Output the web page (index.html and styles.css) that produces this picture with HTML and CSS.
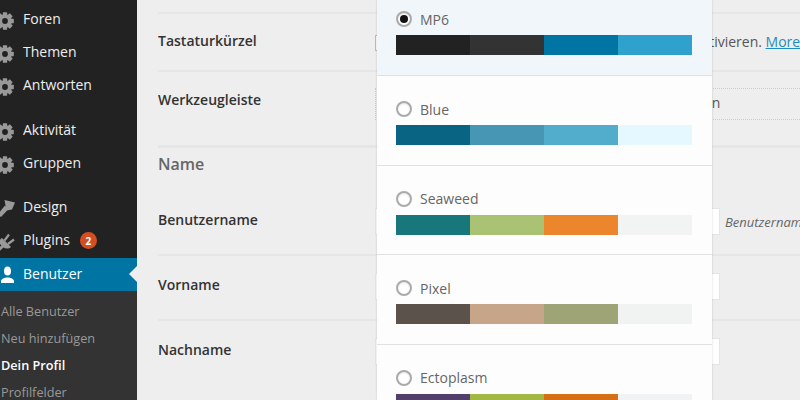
FILE: index.html
```html
<!DOCTYPE html>
<html lang="de">
<head>
<meta charset="utf-8">
<title>Profil</title>
<link rel="stylesheet" href="styles.css">
</head>
<body>
<svg class="defs" width="0" height="0" aria-hidden="true">
  <symbol id="gear" viewBox="0 0 20 20">
    <circle cx="10" cy="10" r="5.6" fill="none" stroke="currentColor" stroke-width="4"/>
    <g fill="currentColor">
      <rect x="7.600" y="0.200" width="4.800" height="19.600" rx=".6"/>
      <rect x="7.600" y="0.200" width="4.800" height="19.600" rx=".6" transform="rotate(45 10 10)"/>
      <rect x="7.600" y="0.200" width="4.800" height="19.600" rx=".6" transform="rotate(90 10 10)"/>
      <rect x="7.600" y="0.200" width="4.800" height="19.600" rx=".6" transform="rotate(135 10 10)"/>
    </g>
    <circle cx="10" cy="10" r="3.200" fill="#222"/>
  </symbol>
</svg>
<div class="page">
  <nav class="sidebar">
    <ul class="menu">
      <li class="item"><svg class="icon gear"><use href="#gear"/></svg>Foren</li>
      <li class="item"><svg class="icon gear"><use href="#gear"/></svg>Themen</li>
      <li class="item"><svg class="icon gear"><use href="#gear"/></svg>Antworten</li>
      <li class="item sep-wide"><svg class="icon gear"><use href="#gear"/></svg>Aktivität</li>
      <li class="item"><svg class="icon gear"><use href="#gear"/></svg>Gruppen</li>
      <li class="item sep"><svg class="icon" viewBox="0 0 18 18"><path fill="currentColor" d="M8.500 1l10.500 2.500-3 7-5.500 1z"/><path fill="currentColor" d="M9 6.500l3.500 3.500-7.500 8-3.500-2.500z"/></svg>Design</li>
      <li class="item"><svg class="icon" viewBox="0 0 18 18"><path fill="currentColor" d="M6 6l9 9c-2.500 2-5.500 2-8 0l-3-3c-1.500-2-.5-4.500 2-6z"/><path fill="none" stroke="currentColor" stroke-width="2.200" d="M8.500 8.500L13 2.500M12 12l6-4.500"/><path fill="none" stroke="currentColor" stroke-width="3" d="M7 14l-6 5.500"/></svg>Plugins<span class="badge">2</span></li>
      <li class="item current"><svg class="icon" viewBox="0 0 18 18"><ellipse cx="11.500" cy="5" rx="3.500" ry="4.500" fill="currentColor"/><path fill="currentColor" d="M5 17v-2c0-2 3-3 5-3.500h3c2 .5 5 1.500 5 3.500v2z"/></svg>Benutzer<span class="pointer"></span></li>
    </ul>
    <ul class="submenu">
      <li>Alle Benutzer</li>
      <li>Neu hinzufügen</li>
      <li class="active">Dein Profil</li>
      <li>Profilfelder</li>
    </ul>
  </nav>
  <main class="content">
    <div class="row row-keys">
      <div class="label">Tastaturkürzel</div>
      <div class="field"><span class="check"></span><span class="nowrap">Die Tastenkürzel zur Kommentar-Moderation aktivieren. <a class="link">More information</a></span></div>
    </div>
    <div class="row row-bar">
      <div class="label">Werkzeugleiste</div>
      <div class="field"><div class="dotted">Werkzeugleiste beim Besuch der Website anzeigen</div></div>
    </div>
    <h2 class="heading">Name</h2>
    <div class="row row-name">
      <div class="label">Benutzername</div>
      <div class="field"><span class="input"></span><em class="hint">Benutzernamen können nicht geändert werden.</em></div>
    </div>
    <div class="row row-plain">
      <div class="label">Vorname</div>
      <div class="field"><span class="input"></span></div>
    </div>
    <div class="row row-plain">
      <div class="label">Nachname</div>
      <div class="field"><span class="input"></span></div>
    </div>
  </main>
  <section class="picker">
    <div class="scheme selected">
      <div class="name"><span class="radio on"></span>MP6</div>
      <div class="swatches"><i class="c1a"></i><i class="c1b"></i><i class="c1c"></i><i class="c1d"></i></div>
    </div>
    <div class="scheme">
      <div class="name"><span class="radio"></span>Blue</div>
      <div class="swatches"><i class="c2a"></i><i class="c2b"></i><i class="c2c"></i><i class="c2d"></i></div>
    </div>
    <div class="scheme">
      <div class="name"><span class="radio"></span>Seaweed</div>
      <div class="swatches"><i class="c3a"></i><i class="c3b"></i><i class="c3c"></i><i class="c3d"></i></div>
    </div>
    <div class="scheme">
      <div class="name"><span class="radio"></span>Pixel</div>
      <div class="swatches"><i class="c4a"></i><i class="c4b"></i><i class="c4c"></i><i class="c4d"></i></div>
    </div>
    <div class="scheme">
      <div class="name"><span class="radio"></span>Ectoplasm</div>
      <div class="swatches"><i class="c5a"></i><i class="c5b"></i><i class="c5c"></i><i class="c5d"></i></div>
    </div>
  </section>
</div>
</body>
</html>
```
FILE: styles.css
```css
* { box-sizing: border-box; }
html, body { margin: 0; padding: 0; height: 100%; overflow: hidden; }
body { font-family: "Open Sans", "Noto Sans", sans-serif; font-size: 14px; color: #333; background: #eee; }
.defs { position: absolute; }
.page { position: relative; display: flex; width: 800px; height: 400px; overflow: hidden; }

.sidebar { flex: 0 0 137px; display: flex; flex-direction: column; background: #222; overflow: hidden; }
.menu, .submenu { list-style: none; margin: 0; padding: 0; }
.menu { padding-top: 3px; }
.item { position: relative; display: flex; align-items: center; height: 33px; padding-bottom: 2px; color: #eee; font-size: 14px; }
.item.sep { margin-top: 11px; }
.item.sep-wide { margin-top: 12px; }
.icon { flex: none; width: 18px; height: 18px; margin: 2px 9px 0 -4px; color: #999; overflow: visible; }
.icon.gear { margin-top: 4px; }
.current { margin-top: 1px; background: #0074a2; color: #fff; }
.current .icon { color: #fff; }
.pointer { position: absolute; right: 0; top: 8px; border: 8px solid transparent; border-left: 0; border-right-color: #eee; }
.badge { display: flex; align-items: center; justify-content: center; width: 17px; height: 17px; margin: 2px 0 0 10px; border-radius: 50%; background: #d54e21; color: #fff; font-size: 10px; font-weight: 700; }
.submenu { flex: 1; background: #333; padding-top: 7px; color: #999; font-size: 12.700px; }
.submenu li { height: 27px; line-height: 27px; padding-left: 1px; white-space: nowrap; }
.submenu .active { color: #fff; font-weight: 600; }

.content { flex: 1; min-width: 0; padding: 12px 0 0 21px; }
.row { display: flex; border-top: 2px solid #e6e6e6; }
.label { flex: 0 0 217px; font-weight: 600; color: #333; font-size: 14px; white-space: nowrap; }
.field { flex: 1; min-width: 0; display: flex; align-items: flex-start; white-space: nowrap; color: #555; }
.row-keys { height: 58px; padding-top: 18px; }
.row-keys .label { margin-top: -1px; }
.check { flex: none; width: 16px; height: 16px; margin: 3px 4px 0 0; background: #fff; border: 1px solid #bbb; }
.nowrap { white-space: nowrap; }
.link { color: #1e8cbe; text-decoration: underline; }
.row-bar { height: 75px; padding-top: 18px; }
.dotted { flex: 1; height: 32px; margin-top: -2px; padding: 4px 0 0 14px; border-top: 1px dotted #ccc; border-bottom: 1px dotted #ccc; border-left: 1px dotted #ccc; }
.heading { margin: 0; padding: 4px 0 0; height: 63px; border-top: 3px solid #e6e6e6; font-size: 16px; line-height: 24px; font-weight: 600; color: #666; }
.row-name { height: 46px; border-top: 0; }
.row-name .label { margin-top: 2px; }
.row-name .field { align-items: center; height: 27px; }
.row-plain { height: 64.500px; padding-top: 17px; }
.row-plain .label { margin-top: 2px; }
.input { flex: none; width: 345px; height: 27px; background: #fff; border: 1px solid #e5e5e5; }
.hint { margin-left: 5px; font-size: 13px; color: #666; }

.picker { position: absolute; left: 377px; top: 0; width: 335px; height: 400px; background: #fff; box-shadow: 0 0 2px rgba(0,0,0,.18); }
.scheme { height: 89.500px; padding: 23px 20px 0 19px; border-bottom: 1px solid #e1e1e1; background: #fdfdfd; }
.scheme.selected { height: 76px; background: #f1f6fa; padding-top: 9px; }
.name { display: flex; align-items: center; height: 20px; color: #666; font-size: 14px; }
.radio { flex: none; width: 16px; height: 16px; margin-right: 8px; border: 2px solid #aaa; border-radius: 50%; background: #fff; box-shadow: inset 0 1px 2px rgba(0,0,0,.1); }
.radio.on { display: flex; }
.radio.on::after { content: ""; width: 8px; height: 8px; margin: 2px; border-radius: 50%; background: #111; }
.swatches { display: flex; height: 20px; margin-top: 6px; }
.swatches i { flex: 0 0 74px; }
.c1a { background: #222; } .c1b { background: #333; } .c1c { background: #0074a2; } .c1d { background: #2ea2cc; }
.c2a { background: #096484; } .c2b { background: #4796b3; } .c2c { background: #52accc; } .c2d { background: #e5f8ff; }
.c3a { background: #17777a; } .c3b { background: #a9c274; } .c3c { background: #eb862c; } .c3d { background: #f2f3f3; }
.c4a { background: #5b524c; } .c4b { background: #c7a589; } .c4c { background: #9ea476; } .c4d { background: #f1f2f2; }
.c5a { background: #523f6d; } .c5b { background: #a3b745; } .c5c { background: #d46f15; } .c5d { background: #f1f2f3; }
```
